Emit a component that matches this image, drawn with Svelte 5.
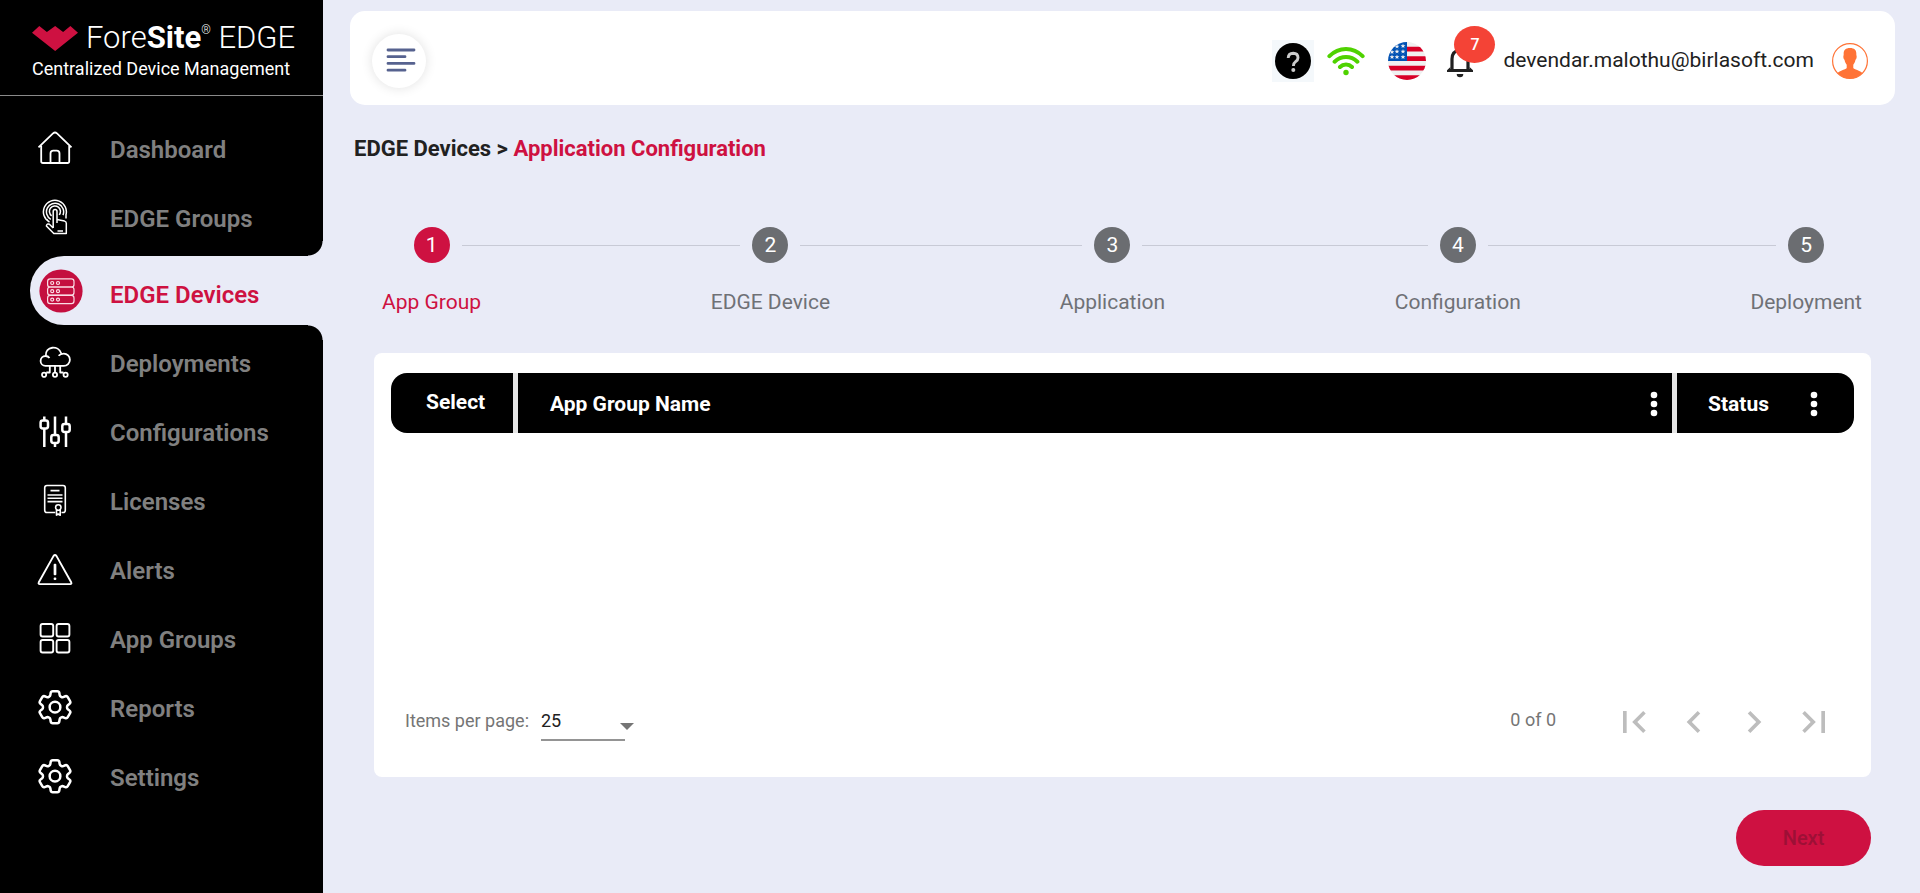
<script>
  const gear =
    'M9.594 3.94c.09-.542.56-.94 1.11-.94h2.593c.55 0 1.02.398 1.11.94l.213 1.281c.063.374.313.686.645.87.074.04.147.083.22.127.325.196.72.257 1.075.124l1.217-.456a1.125 1.125 0 0 1 1.37.49l1.296 2.247a1.125 1.125 0 0 1-.26 1.431l-1.003.827c-.293.241-.438.613-.43.992a7.723 7.723 0 0 1 0 .255c-.008.378.137.75.43.991l1.004.827c.424.35.534.955.26 1.43l-1.298 2.247a1.125 1.125 0 0 1-1.369.491l-1.217-.456c-.355-.133-.75-.072-1.076.124a6.47 6.47 0 0 1-.22.128c-.331.183-.581.495-.644.869l-.213 1.281c-.09.543-.56.94-1.11.94h-2.594c-.55 0-1.019-.398-1.11-.94l-.213-1.281c-.062-.374-.312-.686-.644-.87a6.52 6.52 0 0 1-.22-.127c-.325-.196-.72-.257-1.076-.124l-1.217.456a1.125 1.125 0 0 1-1.369-.49l-1.297-2.247a1.125 1.125 0 0 1 .26-1.431l1.004-.827c.292-.24.437-.613.43-.991a6.932 6.932 0 0 1 0-.255c.007-.38-.138-.751-.43-.992l-1.004-.827a1.125 1.125 0 0 1-.26-1.43l1.297-2.247a1.125 1.125 0 0 1 1.37-.491l1.216.456c.356.133.751.072 1.076-.124.072-.044.146-.086.22-.128.332-.183.582-.495.644-.869l.214-1.28ZM15 12a3 3 0 1 1-6 0 3 3 0 0 1 6 0Z';
  const gearBox = '1.9 1.8 20.2 20.2';
  const box = '0 0 36 36';

  const items = [
    { label: 'Dashboard', box, width: 1.8, d: 'M1.5 17.4 16 3.4q2-1.7 4 0L34.5 17.4M4.2 15.8V31.2q0 1.8 1.8 1.8H30.4q1.8 0 1.8-1.8V15.8M13.5 33V23.4q0-2.8 2.8-2.8h3.4q2.8 0 2.8 2.8V33' },
    { label: 'EDGE Groups', box, width: 1.5, d: 'M12.5 23A11.5 11.5 0 1 1 28.8 16.5M13.8 20.3A8.6 8.6 0 1 1 26 16.1M14.6 16.8A5.5 5.5 0 1 1 22.2 15.9M9.6 20.2l1.4 1.8M29 16V19.5M16.2 29V12.5a1.9 1.9 0 0 1 3.8 0v8l7.5 1.6q1.8.5 1.8 2.2V34.5H16.8L9.4 26.9q.4-2.8 3-1.6l3.8 3.7M20 20.5v3.5M20.5 32h5.5' },
    { label: 'EDGE Devices', active: true },
    { label: 'Deployments', box, width: 1.8, d: 'M8.5 21.8a4.9 4.9 0 1 1 0-9.8q2.6 0 4 2M8.8 12C8 2 21.5.8 24.3 9.6M21.6 11.8q1.8-2.2 5.2-2.2a6.1 6.1 0 0 1 0 12.2H8.5M12.8 22V28.5H9.3M18 22V28.7M23.2 22V28.5h3.2M9.2 30.8a2.1 2.1 0 1 1-4.2 0 2.1 2.1 0 0 1 4.2 0M20.1 30.8a2.1 2.1 0 1 1-4.2 0 2.1 2.1 0 0 1 4.2 0M30.7 30.8a2.1 2.1 0 1 1-4.2 0 2.1 2.1 0 0 1 4.2 0' },
    { label: 'Configurations', box, width: 2.5, d: 'M7.3 3.5V7.5M7.3 15.5V34M18 3.5V22M18 30V34M29 3.5V11M29 19V34M5.8 7.5h3q2.2 0 2.2 2.2v3.6q0 2.2-2.2 2.2h-3q-2.2 0-2.2-2.2v-3.6q0-2.2 2.2-2.2ZM16.5 22h3q2.2 0 2.2 2.2v3.6q0 2.2-2.2 2.2h-3q-2.2 0-2.2-2.2v-3.6q0-2.2 2.2-2.2ZM27.5 11h3q2.2 0 2.2 2.2v3.6q0 2.2-2.2 2.2h-3q-2.2 0-2.2-2.2v-3.6q0-2.2 2.2-2.2Z' },
    { label: 'Licenses', box, width: 1.6, d: 'M18.2 30.5H10q-2.3 0-2.3-2.3V5.8q0-2.3 2.3-2.3H26q2.3 0 2.3 2.3V28.2q0 2.3-2.3 2.3h-1.5M13.5 8.6h9M10.5 13h15M10.5 16.3h15M10.5 19.6h15M24 25.5a2.7 2.7 0 1 1-5.4 0 2.7 2.7 0 0 1 5.4 0M19.5 27.7V33.2l1.8-1.2 1.9 1.2V27.7' },
    { label: 'Alerts', box, width: 1.9, d: 'M16.6 4.9q1.4-1.8 2.8 0L34.2 31.3q.8 1.8-1 1.8H2.8q-1.8 0-1-1.8ZM17.6 13.7h.8V23.2h-.8ZM17.6 27.5h.8v.6h-.8Z' },
    { label: 'App Groups', box, width: 1.9, d: 'M5.6 4h8.6q2 0 2 2v8.5q0 2-2 2H5.6q-2 0-2-2V6q0-2 2-2ZM21.6 4h8.8q2 0 2 2v8.5q0 2-2 2h-8.8q-2 0-2-2V6q0-2 2-2ZM5.6 20h8.6q2 0 2 2v8.5q0 2-2 2H5.6q-2 0-2-2V22q0-2 2-2ZM21.6 20h8.8q2 0 2 2v8.5q0 2-2 2h-8.8q-2 0-2-2V22q0-2 2-2Z' },
    { label: 'Reports', box: gearBox, width: 1.4, d: gear },
    { label: 'Settings', box: gearBox, width: 1.4, d: gear }
  ];

  const steps = ['App Group', 'EDGE Device', 'Application', 'Configuration', 'Deployment'];
  const pagers = [
    { label: 'First page', d: 'M18.4 16.6 13.8 12l4.6-4.6L17 6l-6 6 6 6zM6 6h2v12H6z' },
    { label: 'Previous page', d: 'M15.4 7.4 14 6l-6 6 6 6 1.4-1.4L10.8 12z' },
    { label: 'Next page', d: 'M10 6 8.6 7.4l4.6 4.6-4.6 4.6L10 18l6-6z' },
    { label: 'Last page', d: 'M5.6 7.4 10.2 12l-4.6 4.6L7 18l6-6-6-6zM16 6h2v12h-2z' }
  ];
  const stars = [[15, 4], [9, 4.5], [15, 9.5], [9, 9.5], [4, 10], [15, 15], [9, 15], [4, 15]];
  let current = $state(0);
  let perPage = $state('25');
</script>

<div class="app">
  <aside>
    <div class="brand">
      <div class="name">
        <svg width="46" height="25" viewBox="0 0 139 75" aria-hidden="true"><path fill="#ce1141" d="M0 20 22 0 45 18 70 0 94 18 116 0 139 20 70 75Z" /></svg>
        <span>Fore<b>Site</b><sup>®</sup> EDGE</span>
      </div>
      <div class="tagline">Centralized Device Management</div>
    </div>
    <nav>
      {#each items as item}
        <a href="#top" class:active={item.active}>
          {#if item.active}
            <svg class="disc" viewBox="0 0 44 44" aria-hidden="true">
              <circle cx="22" cy="22" r="21.6" fill="#c40f3f" />
              <g fill="none" stroke="#fbdde5" stroke-width="1.2">
                {#each [9.8, 18, 26.4] as y}
                  <rect x="8.6" {y} width="26.4" height="8.2" rx="2.6" />
                  <circle cx="13.2" cy={y + 4.2} r="1.5" />
                  <circle cx="19" cy={y + 4.2} r="1.5" />
                {/each}
              </g>
            </svg>
          {:else}
            <svg class="icon" viewBox={item.box} fill="none" stroke="#fff" stroke-width={item.width} stroke-linejoin="round" aria-hidden="true"><path d={item.d} /></svg>
          {/if}
          <span>{item.label}</span>
        </a>
      {/each}
    </nav>
  </aside>

  <main id="top">
    <header>
      <button class="menu" aria-label="Toggle menu">
        <svg width="30" height="26" viewBox="0 0 30 26" stroke="#56628f" stroke-width="2.8" stroke-linecap="round"><path d="M2 3h26M2 9.7h17M2 16.4h26M2 23.2h17" /></svg>
      </button>
      <div class="tools">
        <button class="help" aria-label="Help">
          <svg width="36" height="36" viewBox="0 0 36 36"><circle cx="18" cy="18" r="18" /><path d="M13.2 15q.2-4.8 5-4.8 4.8.2 4.8 4.5 0 2.2-2.4 4-2.2 1.6-2.2 4.3" fill="none" stroke="#ccc" stroke-width="2.9" /><circle cx="18.3" cy="27" r="2" fill="#ccc" /></svg>
        </button>
        <svg class="wifi" width="38" height="30" viewBox="0 0 38 30" fill="none" stroke="#4fd200" stroke-width="4" stroke-linecap="round" aria-label="Online" role="img"><path d="M2.4 10.2Q9.5 3 19 3T35.6 10.2M7.6 15.7Q12.5 11 19 11T30.4 15.7M13 21Q15.5 18.5 19 18.5T25 21" /><circle cx="19" cy="26.5" r="2.7" fill="#4fd200" stroke="none" /></svg>
        <button class="flag" aria-label="Language: English (US)">
          <svg width="38" height="38" viewBox="0 0 38 38">
            <defs><clipPath id="disc"><circle cx="19" cy="19" r="19" /></clipPath></defs>
            <g clip-path="url(#disc)">
              <path fill="#f0f0f0" d="M0 0h38v38H0z" />
              <path fill="#d80027" d="M19 4.7h19v4.8H19zM19 14.2h19V19H19zM0 23.7h38v4.8H0zM0 33.2h38V38H0z" />
              <path fill="#0052b4" d="M0 0h19v19H0z" />
              {#each stars as [x, y]}
                <path fill="#f0f0f0" transform="translate({x} {y})" d="M0-2.4.6-.7H2.4L1 .4 1.5 2.1 0 1-1.5 2.1-1 .4-2.4-.7H-.6Z" />
              {/each}
            </g>
          </svg>
        </button>
        <button class="bell" aria-label="Notifications">
          <svg width="28" height="34" viewBox="0 0 28 34"><path d="M6 26V15q0-8 8-9 8 1 8 9v11" fill="none" stroke="#212121" stroke-width="3.2" /><path d="M4.4 23 1 26.2V28h26v-1.8L23.6 23v2H4.4zM10.7 30h6.6a3.3 3.3 0 0 1-6.6 0z" fill="#212121" /><circle cx="14" cy="5" r="2.2" fill="#212121" /></svg>
          <span class="badge">7</span>
        </button>
        <span class="email">devendar.malothu@birlasoft.com</span>
        <button class="avatar" aria-label="Account">
          <svg width="36" height="36" viewBox="0 0 36 36"><defs><clipPath id="face"><circle cx="18" cy="18" r="17.5" /></clipPath></defs><circle cx="18" cy="18" r="17.4" fill="none" stroke="#ff7336" stroke-width="1.2" /><path clip-path="url(#face)" fill="#ff7336" d="M18 5c4.8 0 6.7 2.5 6.3 7 .7 1.5.4 3.8-.8 4.8-.5 2.6-1.3 3.9-2.2 5v3.1c.6 1.7 6.500 2 10 5.600L27 37H9l-4.300-6.500c3.500-3.600 9.400-3.900 10-5.600v-3.100c-.9-1.100-1.700-2.400-2.200-5-1.200-1-1.500-3.300-.8-4.800C11.300 7.500 13.200 5 18 5Z" /></svg>
        </button>
      </div>
    </header>

    <h1>EDGE Devices &gt; <span>Application Configuration</span></h1>

    <ol class="stepper">
      {#each steps as step, i}
        <li class="step" class:current={i === current}>
          <div class="rail"><span class="line"></span><span class="num">{i + 1}</span><span class="line"></span></div>
          <span class="label">{step}</span>
        </li>
        {#if i < steps.length - 1}
          <li class="link" aria-hidden="true"></li>
        {/if}
      {/each}
    </ol>

    <section class="card">
      <div class="grid">
        <table>
          <thead>
            <tr>
              <th class="select">Select</th>
              <th class="group"><div class="cell">App Group Name {@render dots('App Group Name options')}</div></th>
              <th class="status"><div class="cell">Status {@render dots('Status options')}</div></th>
            </tr>
          </thead>
          <tbody></tbody>
        </table>
      </div>
      <footer>
        <label for="per-page">Items per page:</label>
        <div class="field">
          <select id="per-page" bind:value={perPage}>
            <option>25</option>
            <option>50</option>
            <option>100</option>
          </select>
          <svg width="14" height="7" viewBox="0 0 14 7" aria-hidden="true"><path fill="#757575" d="M0 0h14L7 7z" /></svg>
        </div>
        <span class="range">0 of 0</span>
        <div class="pager">
          {#each pagers as p}
            <button aria-label={p.label} disabled><svg width="44" height="44" viewBox="0 0 24 24"><path fill="#bdbdbd" d={p.d} /></svg></button>
          {/each}
        </div>
      </footer>
    </section>

    <div class="actions"><button class="next" disabled>Next</button></div>
  </main>
</div>

{#snippet dots(label)}
  <button class="dots" aria-label={label}><svg width="8" height="26" viewBox="0 0 8 26" fill="#fff"><circle cx="4" cy="4" r="3.3" /><circle cx="4" cy="13" r="3.3" /><circle cx="4" cy="22" r="3.3" /></svg></button>
{/snippet}

<style>
  :global(body) {
    margin: 0;
    background: #e9ebf7;
    font-family: Roboto, sans-serif;
    color: #212121;
  }
  button {
    padding: 0;
    border: 0;
    background: none;
    font-family: inherit;
    color: inherit;
  }
  svg {
    display: block;
  }
  .app {
    display: flex;
    min-height: 100vh;
  }
  aside {
    flex: 0 0 323px;
    background: #000;
  }
  .brand {
    box-sizing: border-box;
    height: 96px;
    padding: 20px 0 0 32px;
    border-bottom: 1px solid #8a8a8a;
    color: #fff;
    white-space: nowrap;
  }
  .name {
    display: flex;
    align-items: center;
    gap: 8px;
    height: 36px;
    font-size: 31px;
    font-weight: 300;
    line-height: 36px;
  }
  .name b {
    font-weight: 700;
  }
  .name sup {
    font-size: 12px;
    line-height: 12px;
    vertical-align: 14px;
  }
  .tagline {
    font-size: 18px;
    line-height: 26px;
  }
  nav {
    padding-top: 15px;
  }
  nav a {
    position: relative;
    box-sizing: border-box;
    display: flex;
    align-items: center;
    height: 69px;
    padding: 4px 0 0 37px;
    color: #808080;
    font-size: 24px;
    font-weight: 600;
    text-decoration: none;
  }
  nav a span {
    line-height: 30px;
    padding-top: 5px;
  }
  .icon {
    width: 36px;
    height: 36px;
    margin-right: 37px;
  }
  .disc {
    width: 44px;
    height: 44px;
    margin: 0 27px 4px 0;
  }
  nav a.active {
    margin: 7px 0 0 30px;
    padding-left: 9px;
    border-radius: 34px 0 0 34px;
    background: #e9ebf7;
    color: #ce1141;
  }
  .active::before,
  .active::after {
    content: "";
    position: absolute;
    right: 0;
    width: 15px;
    height: 15px;
  }
  .active::before {
    bottom: 100%;
    background: radial-gradient(circle at 0 0, #000 14px, #e9ebf7 15px);
  }
  .active::after {
    top: 100%;
    background: radial-gradient(circle at 0 100%, #000 14px, #e9ebf7 15px);
  }
  main {
    flex: 1;
    min-width: 0;
    padding: 11px 25px 26px 27px;
  }
  header {
    display: flex;
    align-items: center;
    justify-content: space-between;
    box-sizing: border-box;
    height: 94px;
    padding: 6px 27px 0 22px;
    border-radius: 15px;
    background: #fff;
  }
  .menu {
    display: grid;
    place-items: center;
    width: 54px;
    height: 54px;
    border-radius: 50%;
    background: #fff;
    box-shadow: 0 0 12px #0000001f;
  }
  .menu svg {
    margin: 0 0 2px 3px;
  }
  .tools {
    display: flex;
    align-items: center;
  }
  .help {
    padding: 3px;
    background: #f4f8fb;
    margin-right: 13px;
  }
  .wifi {
    margin-right: 23px;
  }
  .flag {
    margin-right: 20px;
  }
  .bell {
    position: relative;
    margin-right: 29px;
  }
  .badge {
    position: absolute;
    left: 8px;
    top: -18px;
    width: 41px;
    border-radius: 50%;
    background: #f44336;
    color: #fff;
    font-size: 16px;
    font-weight: 500;
    line-height: 37px;
    text-align: center;
  }
  .email {
    margin-right: 18px;
    padding-bottom: 3px;
    font-size: 21px;
    line-height: 28px;
  }
  h1 {
    margin: 29px 0 0 4px;
    font-size: 22px;
    font-weight: 700;
    line-height: 30px;
  }
  h1 span,
  .current .label {
    color: #ce1141;
  }
  .stepper {
    display: flex;
    margin: 63px 9px 0 32px;
    padding: 0 24px 0 0;
    list-style: none;
  }
  .link {
    flex: 1;
    height: 1px;
    margin-top: 18px;
    background: #c8cad6;
  }
  .rail {
    display: flex;
    align-items: center;
    gap: 12px;
  }
  .line {
    flex: 1;
    height: 1px;
    background: #c8cad6;
  }
  .step:first-child .line:first-child,
  .step:last-child .line:last-child {
    background: none;
  }
  .num {
    width: 36px;
    border-radius: 50%;
    background: #6b6d71;
    color: #fff;
    font-size: 21px;
    line-height: 36px;
    text-align: center;
  }
  .current .num {
    background: #ce1141;
  }
  .label {
    display: block;
    margin-top: 24px;
    color: #6f7176;
    font-size: 21px;
    line-height: 30px;
  }
  .card {
    margin: 36px 24px 0;
    padding: 20px 17px 0;
    border-radius: 8px;
    background: #fff;
  }
  .grid {
    min-height: 300px;
  }
  table {
    width: 100%;
    border-collapse: separate;
    border-spacing: 0;
    table-layout: fixed;
  }
  th {
    box-sizing: border-box;
    height: 60px;
    padding: 0;
    background: #000;
    color: #fff;
    font-size: 21px;
    font-weight: 700;
    text-align: left;
  }
  .select {
    width: 127px;
    padding: 0 0 2px 35px;
    border-right: 5px solid #e6e6e6;
    border-radius: 16px 0 0 16px;
  }
  .group {
    padding: 0 14px 0 32px;
    border-right: 5px solid #e6e6e6;
  }
  .status {
    width: 177px;
    padding: 0 36px 0 31px;
    border-radius: 0 16px 16px 0;
  }
  .cell {
    display: flex;
    align-items: center;
    justify-content: space-between;
    padding-top: 2px;
  }
  footer {
    display: flex;
    align-items: center;
    height: 104px;
    padding: 0 18px 0 14px;
    color: #757575;
    font-size: 18px;
  }
  label {
    margin-right: 12px;
    padding-bottom: 10px;
  }
  .field {
    position: relative;
    width: 84px;
    margin-bottom: 6px;
    border-bottom: 2px solid #949494;
  }
  select {
    width: 100%;
    height: 35px;
    padding: 0 0 2px;
    border: 0;
    appearance: none;
    background: none;
    color: #212121;
    font-family: inherit;
    font-size: 18px;
  }
  .field svg {
    position: absolute;
    right: -9px;
    top: 19px;
    pointer-events: none;
  }
  .range {
    margin: 0 56px 12px auto;
  }
  .pager {
    display: flex;
    gap: 16px;
  }
  .pager button {
    width: 44px;
    padding-bottom: 6px;
  }
  .actions {
    display: flex;
    justify-content: flex-end;
    margin: 33px 24px 0;
  }
  .next {
    width: 135px;
    height: 56px;
    border-radius: 28px;
    background: #ce1141;
    color: #9d1036;
    font-size: 20px;
    font-weight: 500;
  }
</style>
